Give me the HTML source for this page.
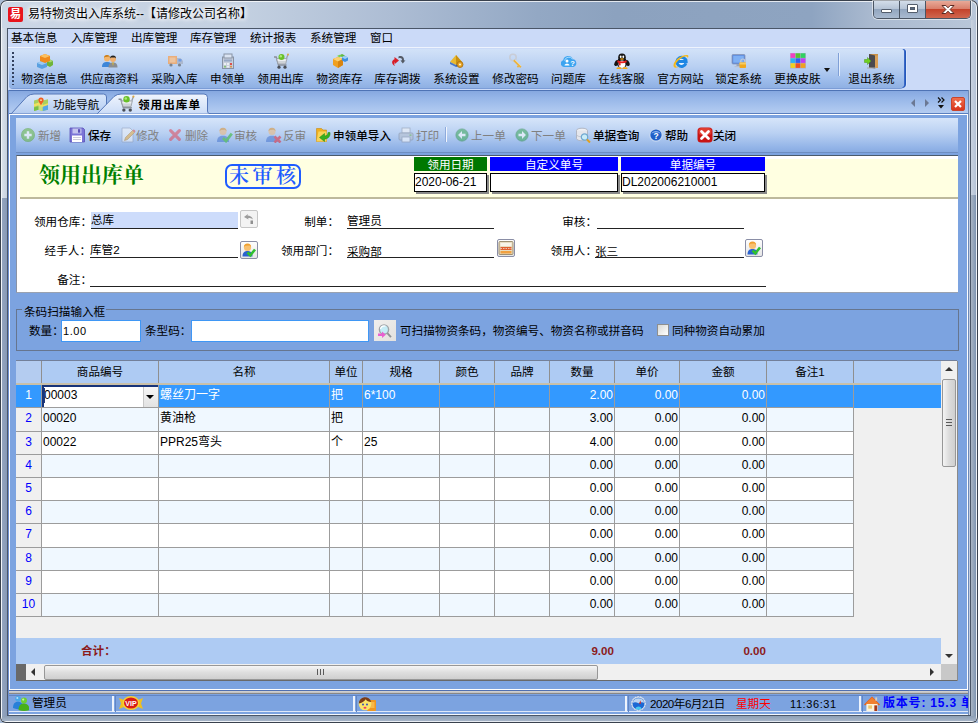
<!DOCTYPE html>
<html><head><meta charset="utf-8">
<style>
*{box-sizing:border-box;margin:0;padding:0}
html,body{width:978px;height:723px;overflow:hidden}
body{position:relative;font-family:"Liberation Sans","Noto Sans CJK SC",sans-serif;font-size:11.6px;color:#000;background:#a9bcd6}
div,span,svg,b,i{position:absolute;white-space:nowrap;font-style:normal}
.t{line-height:14px;height:14px}
.c{text-align:center}
.r{text-align:right}
#frame{left:0;top:0;width:978px;height:723px;border-radius:7px 7px 6px 6px;background:linear-gradient(90deg,#ccd7e6 0,#c3d0e1 25%,#adbdd4 40%,#93a8c4 55%,#8ca2bf 63%,#8ea4c1 83%,#a9b9cf 89%,#b9c7d9 100%);box-shadow:inset 0 0 0 1px #39414d, inset 0 0 0 2px rgba(255,255,255,.75)}
#client{left:8px;top:29px;width:962px;height:686px;background:#7ca3e0;box-shadow:0 0 0 1px #4a5668}
#title{left:28px;top:7px;font-size:12px;line-height:15px;color:#000;text-shadow:0 0 6px #fff,0 0 6px #fff,0 0 4px #fff}
#appicon{left:8px;top:7px;width:15px;height:15px;background:#e8141c;border-radius:2px;color:#fff;font-size:11px;line-height:14px;text-align:center;font-weight:bold}
#capbtn{left:873px;top:1px;width:98px;height:18px;border:1px solid #4b5563;border-top:none;border-radius:0 0 5px 5px;overflow:hidden;box-shadow:0 0 0 1px rgba(255,255,255,.55)}
#capbtn .b{top:0;height:17px;background:linear-gradient(#d3dde9 0,#b6c4d6 45%,#93a6bf 50%,#a9bad0 100%)}
#capbtn .x{background:linear-gradient(#e8a998 0,#d9806c 45%,#c4432b 50%,#d0674f 100%)}
#menubar{left:8px;top:29px;width:962px;height:19px;background:#cbdaf8;border-bottom:1px solid #eef3fd}
#menubar span{top:1px;line-height:15px}
#tbrow{left:8px;top:48px;width:962px;height:42px;background:#cbdaf8}
#tb{left:9px;top:49px;width:895px;height:39px;border-radius:0 3px 4px 4px;background:linear-gradient(#d2e2f8 0,#b9d0f2 45%,#9dbceb 80%,#8fb0e3 100%);box-shadow:1px 0 0 #3a68c6,2px 0 0 #2458bc,3px 0 0 #dbe6fa,0 1px 0 #7b9cd6}
.tbi{top:48px;height:40px}
.tbi .l{left:0;right:0;top:24px;text-align:center;line-height:14px}
.tbi svg{left:50%;margin-left:-8px;top:5px;width:16px;height:16px}
#tabs{left:9px;top:90px;width:959px;height:24px;background:linear-gradient(#86a8e0 0,#95b5e8 30%,#b4ccf1 100%);border-top:1px solid #4e73b5;border-bottom:1px solid #5a7fbf}
#page{left:9px;top:114px;width:959px;height:576px;border:1px solid #fff;background:#7ca3e0}
#itb{left:16px;top:118px;width:942px;height:35px;background:linear-gradient(#d6e5fa 0,#b9d0f2 45%,#94b5e8 85%,#88abe2 100%);border-bottom:1px solid #6d8dc2}
#itb .l{top:11px;line-height:14px;font-weight:500}
#itb .d{color:#808080;font-weight:400}
#itb svg{top:9px;width:16px;height:16px}
#form{left:16px;top:155px;width:942px;height:138px;background:#fff;border-top:1px solid #4a5a6c;border-left:1px solid #8a93a5;border-bottom:1px solid #9aa2b0}
#hdr{left:20px;top:159px;width:938px;height:40px;background:#ffffe1;border-bottom:2px solid #bdb99c}
#ftitle{left:39px;top:161px;font-family:"Liberation Serif","Noto Serif CJK SC",serif;font-weight:bold;font-size:21px;line-height:28px;color:#008000}
#stamp{left:225px;top:164px;width:76px;height:25px;border:2px solid #1f5cff;border-radius:7px;color:#1f5cff;font-family:"Liberation Serif","Noto Serif CJK SC",serif;font-size:20px;font-weight:600;line-height:20px;text-align:left;letter-spacing:3.5px;padding-left:2px}
.hl{top:157px;height:14px;color:#fff;text-align:center;line-height:16px;font-size:11.6px;overflow:hidden}
.hi{top:173px;height:19px;background:#fff;border:1px solid #000;box-shadow:2px 2px 0 #8a8a8a;line-height:16px;padding-left:0;font-size:12px}
.fl{line-height:14px}
.ul{height:1px;background:#222}
.sb{width:18px;height:18px;border:1px solid #8a8ea6;border-radius:2px;background:linear-gradient(#fdfdfd,#e6e6e6)}
#gb{left:16px;top:309px;width:943px;height:42px;border:1px solid #66758f}
.inp{background:#fff;border:1px solid #3f97f5;height:22px}
#grid{left:16px;top:360px;width:941px;height:321px;background:#f0f0f0;border-top:1px solid #73809a}
.gh{top:361px;height:22px;background:#aecbf3;line-height:22px;text-align:center;border-right:1px solid #8f8f8f}
.cell{border-right:1px solid #9c9c9c;border-bottom:1px solid #9c9c9c;line-height:21px;font-size:12px}
.num{text-align:right}
#status{left:9px;top:690px;width:959px;height:25px;background:linear-gradient(#4f6fb0 0,#4f6fb0 1px,#d4d4d4 1px,#bdbdbd 3px,#878787 3px,#878787 4px,#7ca3e0 4px,#7ca3e0 5px,#6285c4 5px,#6285c4 6px,#7ca3e0 6px,#7ca3e0 21px,#dfe8f8 21px,#dfe8f8 22px,#7ca3e0 22px,#7ca3e0 24px,#f4f7fc 24px)}
</style></head><body>
<div id="frame"></div>
<div id="appicon">易</div>
<div id="title">易特物资出入库系统--【请修改公司名称】</div>
<div id="capbtn">
  <div class="b" style="left:0;width:25px"></div>
  <div class="b" style="left:26px;width:25px"></div>
  <div class="b x" style="left:52px;width:45px"></div>
  <div style="left:25px;top:0;width:1px;height:17px;background:#4b5563"></div>
  <div style="left:51px;top:0;width:1px;height:17px;background:#4b5563"></div>
  <div style="left:7px;top:8px;width:11px;height:4px;background:#fff;border:1px solid #535d6c;border-radius:1px"></div>
  <div style="left:33px;top:3px;width:11px;height:9px;border:1px solid #535d6c;background:#fff;border-radius:1px"></div>
  <div style="left:36px;top:6px;width:5px;height:3px;border:1px solid #535d6c;background:#5a6980"></div>
  <svg style="left:66px;top:3px" width="16" height="11" viewBox="0 0 16 11"><path d="M2 1.500h3.800l2.200 2.300 2.200-2.300h3.800l-3.900 4 3.900 4h-3.800L8 7.200 5.800 9.500h-3.800l3.900-4z" fill="#fff" stroke="#5a2a22" stroke-width="1"/></svg>
</div>
<div id="client"></div>
<div style="left:2px;top:28px;width:5px;height:170px;background:linear-gradient(90deg,#d9e0ea,#c6d0de)"></div>
<div style="left:2px;top:198px;width:5px;height:519px;background:linear-gradient(90deg,#94a5bf,#8799b5)"></div>
<div style="left:971px;top:20px;width:5px;height:175px;background:linear-gradient(90deg,#c9d3e0,#b5c3d6)"></div>
<div style="left:971px;top:195px;width:5px;height:522px;background:linear-gradient(90deg,#a9b5c4,#8096b2)"></div>
<div style="left:2px;top:716px;width:974px;height:5px;background:linear-gradient(#8d9fb6,#a7b5c8)"></div>
<div style="left:968px;top:90px;width:1px;height:625px;background:#6f8ab8"></div>
<div style="left:969px;top:90px;width:1px;height:625px;background:#c4cfe2"></div>
<div style="left:8px;top:90px;width:1px;height:625px;background:#6f90d0"></div>
<div id="menubar">
<span style="left:3px">基本信息</span>
<span style="left:63px">入库管理</span>
<span style="left:123px">出库管理</span>
<span style="left:182px">库存管理</span>
<span style="left:242px">统计报表</span>
<span style="left:302px">系统管理</span>
<span style="left:362px">窗口</span>
</div>
<div id="tbrow"></div><div id="tb"></div>
<div style="left:12px;top:52px;width:2px;height:33px;background:repeating-linear-gradient(#33415e 0,#33415e 2px,transparent 2px,transparent 4px)"></div>
<div class="tbi" style="left:15px;width:59px"><svg viewBox="0 0 16 16"><path d="M0 10l5-2 5 2v4l-5 2-5-2z" fill="#5aa0e0"/><path d="M0 10l5 2 5-2-5-2z" fill="#9ccaf2"/><path d="M10 8l3-1.500 3 1.500v4l-3 2-3-1.500z" fill="#6fb43a"/><path d="M10 8l3 1.500 3-1.500-3-1.500z" fill="#a7d870"/><path d="M3 3l5-2 5 2v5l-5 2-5-2z" fill="#f08a1c"/><path d="M3 3l5 2 5-2-5-2z" fill="#fbc060"/></svg><span class="l">物资信息</span></div>
<div class="tbi" style="left:74px;width:71px"><svg viewBox="0 0 16 16"><circle cx="5" cy="5.500" r="3" fill="#f3b56b"/><path d="M2 5a3 3 0 0 1 6 0l-1-1.500-4 .5z" fill="#c97a12"/><path d="M0 14c0-4 2-5 5-5s5 1 5 5z" fill="#3d86d8"/><circle cx="11" cy="6" r="3" fill="#f0b070"/><path d="M8 5.500a3 3 0 0 1 6 0l-1-1-4 0z" fill="#222"/><path d="M6.500 14.500c0-4 2-5 4.500-5s4.500 1 4.500 5z" fill="#8a8d92"/><path d="M10.300 9.500h1.400l-.7 4z" fill="#e8c020"/></svg><span class="l">供应商资料</span></div>
<div class="tbi" style="left:145px;width:59px"><svg viewBox="0 0 16 16"><g opacity=".8"><rect x="1" y="3" width="9" height="8" fill="#f2a45e"/><rect x="2.500" y="4.500" width="6" height="5" fill="#f7c08c"/><path d="M10 5h3.500l2.500 3v3h-6z" fill="#a9b3c6"/><rect x="11.500" y="6" width="3" height="2.500" fill="#5f8fe0"/><circle cx="4" cy="12" r="1.600" fill="#6b7078"/><circle cx="12.500" cy="12" r="1.600" fill="#6b7078"/></g></svg><span class="l">采购入库</span></div>
<div class="tbi" style="left:204px;width:47px"><svg viewBox="0 0 16 16"><g opacity=".85"><rect x="2.500" y="4" width="11" height="11.500" fill="#c9ced8" stroke="#7f8898"/><rect x="4" y="1" width="8" height="4" fill="#dfe6f2" stroke="#7f8898"/><rect x="4" y="6.500" width="8" height="2" fill="#8fa0bd"/><rect x="4" y="10" width="2" height="2" fill="#f4f4f4"/><rect x="7" y="10" width="2" height="2" fill="#f4f4f4"/><rect x="10" y="10" width="2" height="2" fill="#e03a30"/><rect x="4" y="12.800" width="2" height="1.700" fill="#7cbf60"/><rect x="7" y="12.800" width="2" height="1.700" fill="#f4f4f4"/><rect x="10" y="12.800" width="2" height="1.700" fill="#e08a30"/></g></svg><span class="l">申领单</span></div>
<div class="tbi" style="left:251px;width:59px"><svg viewBox="0 0 16 16"><path d="M1 4h2.200l2.300 8h8" fill="none" stroke="#8a8f98" stroke-width="1.400"/><path d="M13.500 5.500l1.500-4" fill="none" stroke="#9a9fa8" stroke-width="1.300"/><path d="M3.500 5.500h10.500l-1.300 5.500h-7.500z" fill="#cfd3d8" stroke="#9aa0a8" stroke-width=".8"/><path d="M4.500 6.300h8.500l-.4 1.700h-7.600z" fill="#eceef0"/><circle cx="8.500" cy="4" r="3" fill="#68c028"/><circle cx="7.800" cy="3.200" r="1.200" fill="#b0e878"/><circle cx="6" cy="14.200" r="1.600" fill="#4a4e56"/><circle cx="12" cy="14.200" r="1.600" fill="#4a4e56"/><circle cx="15" cy="1.500" r="1" fill="#e0a840"/></svg><span class="l">领用出库</span></div>
<div class="tbi" style="left:310px;width:59px"><svg viewBox="0 0 16 16"><path d="M1 6l5-2 5 2v6l-5 3-5-3z" fill="#f0a020"/><path d="M1 6l5 2.500 5-2.500-5-2z" fill="#fbd070"/><path d="M6 8.500v6.500l5-3v-6z" fill="#d88410"/><path d="M7 2.500l3-1.500 3 1.500-3 1.500z" fill="#60b840"/><path d="M10 4.500l3-1.500 3 1.500v3l-3 1.500-3-1.500z" fill="#3f8fe0"/><path d="M10 4.500l3 1.500 3-1.500-3-1.500z" fill="#9cd0f8"/><path d="M5 3l2.500-1.200 2.500 1.200-2.500 1.200z" fill="#7cd050"/></svg><span class="l">物资库存</span></div>
<div class="tbi" style="left:368px;width:59px"><svg viewBox="0 0 16 16"><path d="M8.500 3.500c3-1.500 6 .5 5.500 4l1.500-.3-2.700 3.300-2.300-3 1.500-.2c.2-1.800-1.500-2.800-3.500-1.800z" fill="#555b66"/><path d="M8 6.500l-4.500-3.500v2.200c-3 .8-3.500 5 .5 6.800 -1.500-2 -1-3.800 -.5-4v2.200z" fill="#d81e28" transform="translate(1,1)"/></svg><span class="l">库存调拨</span></div>
<div class="tbi" style="left:427px;width:59px"><svg viewBox="0 0 16 16"><path d="M1 9l6-7 6 7-6 3z" fill="#e8b830"/><path d="M7 2l6 7-6 3z" fill="#c89010"/><path d="M1 9l6 3v2l-6-3z" fill="#4a78c8"/><path d="M7 12l6-3v2l-6 3z" fill="#3560b0"/><circle cx="11" cy="11.500" r="3" fill="#e8a020" stroke="#a06a10" stroke-width=".8"/><circle cx="11" cy="11.500" r="1.100" fill="#fff3c0"/></svg><span class="l">系统设置</span></div>
<div class="tbi" style="left:486px;width:59px"><svg viewBox="0 0 16 16"><g opacity=".9"><circle cx="5" cy="4.500" r="3.200" fill="none" stroke="#c9ccd4" stroke-width="1.600"/><path d="M6.500 6.500l7 7-1.200 1.500-1.300-1.300-1 1-1.200-1.200 1-1-4.600-4.600z" fill="#f0b030"/><path d="M7 7l6 6" stroke="#fbe090" stroke-width=".8"/></g></svg><span class="l">修改密码</span></div>
<div class="tbi" style="left:545px;width:47px"><svg viewBox="0 0 16 16"><path d="M3 14a3.500 3.500 0 0 1-.8-6.800 5 5 0 0 1 9.600-1 4 4 0 0 1 .7 7.800z" fill="#3da4f0"/><path d="M3.500 7.500a4.500 4.500 0 0 1 8-1.500" fill="none" stroke="#a8dcff" stroke-width="1"/><circle cx="6" cy="8" r="1.500" fill="#fff"/><path d="M3.500 12.500c0-2.500 5-2.500 5 0z" fill="#fff"/><text x="9.300" y="12.500" font-family="Liberation Sans,sans-serif" font-weight="bold" font-size="7.500" fill="#fff">?</text></svg><span class="l">问题库</span></div>
<div class="tbi" style="left:592px;width:59px"><svg viewBox="0 0 16 16"><ellipse cx="2.600" cy="10" rx="2" ry="3.200" fill="#151515" transform="rotate(25 2.600 10)"/><ellipse cx="13.400" cy="10" rx="2" ry="3.200" fill="#151515" transform="rotate(-25 13.400 10)"/><ellipse cx="8" cy="9.800" rx="5.200" ry="5.400" fill="#151515"/><ellipse cx="8" cy="4.500" rx="3.800" ry="3.900" fill="#151515"/><ellipse cx="8" cy="11.200" rx="3.400" ry="3.700" fill="#fff"/><path d="M3.600 7.300c2.500 1.500 6.300 1.500 8.800 0l.4 1.900c-2.700 1.500-6.900 1.500-9.600 0z" fill="#e82020"/><path d="M4.800 8.800l.2 3.800 1.700-.3-.3-3.200z" fill="#e82020"/><ellipse cx="6.700" cy="3.800" rx=".9" ry="1.200" fill="#fff"/><ellipse cx="9.300" cy="3.800" rx=".9" ry="1.200" fill="#fff"/><ellipse cx="8" cy="6" rx="2" ry=".8" fill="#f8a810"/><ellipse cx="5" cy="15.200" rx="2.600" ry="1" fill="#f8a810"/><ellipse cx="11" cy="15.200" rx="2.600" ry="1" fill="#f8a810"/></svg><span class="l">在线客服</span></div>
<div class="tbi" style="left:651px;width:59px"><svg viewBox="0 0 16 16"><circle cx="8.500" cy="8.700" r="4.600" fill="#e4f2ff"/><path d="M12.900 10.200a4.600 4.600 0 1 1 .2-1.700h-8.600" fill="none" stroke="#1c86e4" stroke-width="3"/><path d="M.8 13.800c-2-4.200 6-11.800 13-11.800 2.200 0 1.800 2 .8 3.600 .4-2-1-2.400-2.600-2.100-5 1-10.700 7.200-9.200 9.700 .8 1.200 3 .3 4.200-.5-2.600 2.200-5.200 2.500-6.200 1.100z" fill="#f4b818"/></svg><span class="l">官方网站</span></div>
<div class="tbi" style="left:709px;width:59px"><svg viewBox="0 0 16 16"><rect x="1" y="1.500" width="13" height="9.500" rx="1" fill="#5a86d8" stroke="#8a98b8" stroke-width=".8"/><rect x="2.200" y="2.700" width="10.600" height="7" fill="#7fb0f4"/><rect x="5.500" y="11" width="4" height="2" fill="#9aa4b8"/><rect x="3.500" y="13" width="8" height="1.200" fill="#b8c0d0"/><path d="M9.800 9.500v-1.500a2 2 0 0 1 4 0v1.500" fill="none" stroke="#c8ccd4" stroke-width="1.200"/><rect x="8.500" y="9.500" width="6.500" height="5.500" rx=".8" fill="#f0a820"/><rect x="8.500" y="9.500" width="6.500" height="2" fill="#f8cc60"/></svg><span class="l">锁定系统</span></div>
<div class="tbi" style="left:768px;width:59px"><svg viewBox="0 0 16 16"><rect x="0" y="0" width="16" height="15.500" fill="#8a7a90" opacity=".35"/><rect x="0.5" y="0.3" width="4.700" height="4.600" fill="#f040c0"/><rect x="5.6" y="0.3" width="4.700" height="4.600" fill="#58c030"/><rect x="10.7" y="0.3" width="4.700" height="4.600" fill="#30d060"/><rect x="0.5" y="5.3" width="4.700" height="4.600" fill="#30b0f0"/><rect x="5.6" y="5.3" width="4.700" height="4.600" fill="#3060f0"/><rect x="10.7" y="5.3" width="4.700" height="4.600" fill="#c040f0"/><rect x="0.5" y="10.3" width="4.700" height="4.600" fill="#f0d020"/><rect x="5.6" y="10.3" width="4.700" height="4.600" fill="#f05020"/><rect x="10.7" y="10.3" width="4.700" height="4.600" fill="#f0a020"/></svg><span class="l">更换皮肤</span></div>
<div class="tbi" style="left:842px;width:59px"><svg viewBox="0 0 16 16"><path d="M5 1h9v14h-9z" fill="#c89048"/><path d="M5 1l6 1.500v13l-6-1z" fill="#4a4a50"/><path d="M11 2.500h3v12.500h-3z" fill="#d8a058"/><path d="M3 14.500h9v1h-9z" fill="#a8a8a8"/><path d="M0.500 6.500h3v-2l3.500 3.500-3.500 3.500v-2h-3z" fill="#70d020" stroke="#4a9a10" stroke-width=".5"/></svg><span class="l">退出系统</span></div>
<div style="left:824px;top:68px;border:3px solid transparent;border-top:4px solid #111;border-bottom:none;width:0;height:0"></div>
<div style="left:838px;top:53px;width:1px;height:23px;background:#7f9fd6"></div><div style="left:839px;top:53px;width:1px;height:23px;background:#e4eefc"></div>
<div id="tabs"></div>
<svg style="left:9px;top:90px" width="420" height="25" viewBox="0 0 420 25">
<defs><linearGradient id="tg1" x1="0" y1="0" x2="0" y2="1"><stop offset="0" stop-color="#d8e6fb"/><stop offset="1" stop-color="#b4ccf1"/></linearGradient>
<linearGradient id="tg2" x1="0" y1="0" x2="0" y2="1"><stop offset="0" stop-color="#f0f5fd"/><stop offset="1" stop-color="#cbdcf7"/></linearGradient></defs>
<path d="M2 24 L18 6.500 Q21 4 25 4 L94.500 4 Q97.500 4 97.500 7 L97.500 24 Z" fill="url(#tg1)" stroke="#5577b8" stroke-width="1"/>
<path d="M88 24 L105 6.500 Q108 4 112 4 L195 4 Q198.500 4 198.500 7.500 L198.500 21 Q198.500 24 201.500 24 Z" fill="url(#tg2)" stroke="#5577b8" stroke-width="1"/>
<path d="M88.500 24.500 L200 24.500" stroke="#cbdcf7" stroke-width="1.500"/>
</svg>
<svg style="left:34px;top:97px" width="14" height="14" viewBox="0 0 16 16"><path d="M0 4l5-1.500 5 1.500 6-1.500v12l-6 1.500-5-1.500-5 1.500z" fill="#a8d060"/><path d="M5 2.500l5 1.500v12l-5-1.500z" fill="#c8e080"/><path d="M0 8l5-1.500 5 2.500 6-2v3l-6 2-5-2.500-5 1.500z" fill="#f0e060"/><path d="M10 11l6-2v5.500l-6 1.500z" fill="#58a8e8"/><path d="M0 12l5-1.500v4l-5 1.500z" fill="#78c048"/><path d="M8 9.500c-1.500-2.500-3-4-3-5.800a3 3 0 0 1 6 0c0 1.800-1.500 3.300-3 5.800z" fill="#f06020"/><circle cx="8" cy="3.600" r="1.100" fill="#fbd0a0"/></svg>
<span class="t" style="left:53px;top:98px">功能导航</span>
<svg style="left:117px;top:95px" width="18" height="17" viewBox="0 0 16 16"><path d="M1 4h2.200l2.300 8h8" fill="none" stroke="#8a8f98" stroke-width="1.400"/><path d="M13.500 5.500l1.500-4" fill="none" stroke="#9a9fa8" stroke-width="1.300"/><path d="M3.500 5.500h10.500l-1.300 5.500h-7.500z" fill="#cfd3d8" stroke="#9aa0a8" stroke-width=".8"/><path d="M4.500 6.300h8.500l-.4 1.700h-7.600z" fill="#eceef0"/><circle cx="8.500" cy="4" r="3" fill="#68c028"/><circle cx="7.800" cy="3.200" r="1.200" fill="#b0e878"/><circle cx="6" cy="14.200" r="1.600" fill="#4a4e56"/><circle cx="12" cy="14.200" r="1.600" fill="#4a4e56"/><circle cx="15" cy="1.500" r="1" fill="#e0a840"/></svg>
<span class="t" style="left:138px;top:98px;font-weight:bold;letter-spacing:1px">领用出库单</span>
<div style="left:911px;top:99px;width:0;height:0;border:4px solid transparent;border-right:4px solid #6b7894;border-left:none"></div>
<div style="left:925px;top:99px;width:0;height:0;border:4px solid transparent;border-left:4px solid #6b7894;border-right:none"></div>
<svg style="left:936px;top:96px" width="10" height="14" viewBox="0 0 10 14"><path d="M2 1.500l2.500 2.500-2.500 2.500M5.500 1.500l2.500 2.500-2.500 2.500" fill="none" stroke="#111" stroke-width="1.200"/><path d="M2 9h6l-3 3.500z" fill="#111"/></svg>
<div style="left:951px;top:97px;width:14px;height:14px;border-radius:2px;background:linear-gradient(#f0704e,#d8341c);border:1px solid #c8442c"></div>
<svg style="left:951px;top:97px" width="14" height="14" viewBox="0 0 14 14"><path d="M4 4l6 6M10 4l-6 6" stroke="#fff" stroke-width="2.200" stroke-linecap="butt"/></svg>
<div id="page"></div>
<div id="itb">
<svg style="left:5px;top:9.5px;width:14px;height:14px" viewBox="0 0 16 16" opacity=".55"><circle cx="8" cy="8" r="7.500" fill="#68b840"/><circle cx="8" cy="8" r="7.500" fill="none" stroke="#4c9c28" stroke-width=".8"/><path d="M8 3.800v8.400M3.800 8h8.400" stroke="#fff" stroke-width="2.800"/></svg><span class="l d" style="left:22px">新增</span>
<svg style="left:53px;top:9px;width:16px;height:16px" viewBox="0 0 16 16"><path d="M1 1h13l1.500 1.500v12.500h-14.500z" fill="#7b74d6" stroke="#5a50b8" stroke-width=".8"/><rect x="3.500" y="1.500" width="9" height="5" fill="#c4c4ee"/><rect x="9" y="2.200" width="2.200" height="3.500" fill="#5a50b8"/><rect x="3" y="8.500" width="10" height="6.500" fill="#fff"/><path d="M4 10.500h8M4 12.500h8" stroke="#c0c0d0" stroke-width=".8"/></svg><span class="l" style="left:72px">保存</span>
<svg style="left:104px;top:9px;width:16px;height:16px" viewBox="0 0 16 16" opacity=".55"><path d="M2 1h8l3 3v11h-11z" fill="#f4f6fa" stroke="#8a98b0" stroke-width=".8"/><path d="M12.500 3.500l2 2-7 7-3 1 1-3z" fill="#f0b040" stroke="#b07820" stroke-width=".6"/><path d="M12.500 3.500l2 2 .8-.8c.5-.5-1.500-2.500-2-2z" fill="#e85050"/></svg><span class="l d" style="left:120px">修改</span>
<svg style="left:152px;top:9.5px;width:14px;height:14px" viewBox="0 0 16 16" opacity=".55"><path d="M3 3l10 10M13 3l-10 10" stroke="#e04858" stroke-width="3.600" stroke-linecap="round"/></svg><span class="l d" style="left:169px">删除</span>
<svg style="left:201px;top:9px;width:16px;height:16px" viewBox="0 0 16 16" opacity=".55"><circle cx="6" cy="4.500" r="3.500" fill="#f0b878"/><path d="M2.500 4.300a3.500 3.500 0 0 1 7 0l-1.600-1.600-3.800 .2z" fill="#d89030"/><path d="M0 15c0-5 2.800-6.300 6-6.300s6 1.300 6 6.300z" fill="#4a78d0"/><path d="M6 11l3 3 5.800-7.300" fill="none" stroke="#30b828" stroke-width="2.800"/></svg><span class="l d" style="left:218px">审核</span>
<svg style="left:250px;top:9px;width:16px;height:16px" viewBox="0 0 16 16" opacity=".55"><circle cx="6" cy="4.500" r="3.500" fill="#f0b878"/><path d="M2.500 4.300a3.500 3.500 0 0 1 7 0l-1.600-1.600-3.800 .2z" fill="#d89030"/><path d="M0 15c0-5 2.800-6.300 6-6.300s6 1.300 6 6.300z" fill="#4a78d0"/><path d="M8.500 9.500l6 6M14.500 9.500l-6 6" stroke="#e02838" stroke-width="2.600"/></svg><span class="l d" style="left:267px">反审</span>
<svg style="left:299px;top:9px;width:16px;height:16px" viewBox="0 0 16 16"><path d="M1.500 1.500h5l1.500 1.500h3.500v11.500h-10z" fill="#f0b020" stroke="#c88a10" stroke-width=".6"/><path d="M3.500 4.500h8v10h-10z" fill="#f8d458"/><path d="M15 5.500c.5 4-2 6.500-5.500 6.500v2.500l-5-4 5-4v2.500c2 0 3.500-1 3.500-3.500z" fill="#38b020" stroke="#208810" stroke-width=".5"/></svg><span class="l" style="left:317px">申领单导入</span>
<svg style="left:382px;top:9px;width:16px;height:16px" viewBox="0 0 16 16" opacity=".55"><rect x="4" y="1" width="8" height="5" fill="#f8f8f8" stroke="#8890a0" stroke-width=".8"/><rect x="1" y="6" width="14" height="7" rx="1" fill="#b8c0cc" stroke="#7a8290" stroke-width=".8"/><rect x="4" y="10" width="8" height="5" fill="#fff" stroke="#8890a0" stroke-width=".8"/><rect x="11.500" y="7.500" width="2" height="1.200" fill="#50b030"/></svg><span class="l d" style="left:400px">打印</span>
<svg style="left:439px;top:9.5px;width:14px;height:14px" viewBox="0 0 16 16" opacity=".55"><circle cx="8" cy="8" r="7" fill="#3ca858"/><circle cx="8" cy="8" r="7" fill="none" stroke="#2a8440" stroke-width=".8"/><path d="M12 6.500h-4v-3l-4.500 4.500 4.500 4.500v-3h4z" fill="#fff"/></svg><span class="l d" style="left:455px">上一单</span>
<svg style="left:499px;top:9.5px;width:14px;height:14px" viewBox="0 0 16 16" opacity=".55"><circle cx="8" cy="8" r="7" fill="#3ca858"/><circle cx="8" cy="8" r="7" fill="none" stroke="#2a8440" stroke-width=".8"/><path d="M4 6.500h4v-3l4.500 4.500-4.500 4.500v-3h-4z" fill="#fff"/></svg><span class="l d" style="left:515px">下一单</span>
<svg style="left:559px;top:9px;width:16px;height:16px" viewBox="0 0 16 16"><ellipse cx="7" cy="3.500" rx="5.500" ry="2.300" fill="#eef0f4" stroke="#a8acb8" stroke-width=".8"/><path d="M1.500 3.500v8c0 1.300 2.500 2.300 5.500 2.300s5.500-1 5.500-2.300v-8" fill="#e4e6ec" stroke="#a8acb8" stroke-width=".8"/><path d="M1.500 7.500c0 1.300 2.500 2.300 5.500 2.300s5.500-1 5.500-2.300" fill="none" stroke="#b8bcc8" stroke-width=".8"/><circle cx="9.500" cy="10" r="3.200" fill="#c8ecf8" stroke="#70a8d0" stroke-width="1.200"/><path d="M12 12.500l3 3" stroke="#e0a020" stroke-width="2"/></svg><span class="l" style="left:577px">单据查询</span>
<svg style="left:632px;top:9px;width:16px;height:16px" viewBox="0 0 16 16"><circle cx="8" cy="8" r="6.800" fill="#c8d8f0"/><circle cx="8" cy="8" r="5.600" fill="#2060c8"/><path d="M3.500 6.500c1-3.500 8-3.500 9 0-2-1.500-7-1.500-9 0z" fill="#8cb4f0"/><text x="5.600" y="11.600" font-family="Liberation Sans,sans-serif" font-weight="bold" font-size="8.500" fill="#fff">?</text></svg><span class="l" style="left:649px">帮助</span>
<svg style="left:681px;top:9px;width:16px;height:16px" viewBox="0 0 16 16"><rect x=".5" y=".5" width="15" height="15" rx="3.500" fill="#c81414"/><rect x="1.500" y="1" width="13" height="7" rx="3" fill="#e03c30"/><path d="M4.500 4.500l7 7M11.500 4.500l-7 7" stroke="#fff" stroke-width="2.800" stroke-linecap="round"/></svg><span class="l" style="left:697px">关闭</span>
<div style="left:429px;top:9px;width:1px;height:15px;background:#8eabdc"></div><div style="left:430px;top:9px;width:1px;height:15px;background:#f2f6fd"></div>
</div>
<div id="form"></div><div id="hdr"></div>
<div id="ftitle">领用出库单</div>
<div id="stamp">未审核</div>
<div class="hl" style="left:414px;width:73px;background:#007800">领用日期</div>
<div class="hl" style="left:490px;width:128px;background:#0000ff">自定义单号</div>
<div class="hl" style="left:621px;width:144px;background:#0000ff">单据编号</div>
<div class="hi" style="left:414px;width:73px">2020-06-21</div>
<div class="hi" style="left:490px;width:128px"></div>
<div class="hi" style="left:621px;width:144px">DL202006210001</div>
<div style="left:91px;top:212px;width:147px;height:16px;background:#cddcfb"></div>
<span class="fl" style="right:886px;top:215px">领用仓库：</span>
<span class="fl" style="left:91px;top:213px">总库</span>
<div class="ul" style="left:91px;top:228px;width:147px"></div>
<div class="sb" style="left:240px;top:210px;border-color:#c6c6c6;background:#f3f3f3"></div><svg style="left:241px;top:211px" width="16" height="16" viewBox="0 0 16 16"><path d="M12 8.500c-1-3-3-4-5.500-4l.5-1.500-4 3 4.500 2.500-.3-1.600c1.800 0 3.600.3 4.800 1.600z" fill="#9c9c9c"/><rect x="9.500" y="9.500" width="2.500" height="3.500" fill="#909090"/></svg>
<span class="fl" style="right:887px;top:244px">经手人：</span>
<span class="fl" style="left:90px;top:243px">库管2</span>
<div class="ul" style="left:90px;top:257px;width:148px"></div>
<div class="sb" style="left:240px;top:241px"></div><svg style="left:241px;top:242px" width="16" height="16" viewBox="0 0 16 16"><circle cx="6.500" cy="5.500" r="3.600" fill="#f8c070"/><path d="M2.900 5a3.600 3.600 0 0 1 7.200 0l-1.600-1.600-4 .3z" fill="#f0a030"/><path d="M1.500 14.500c0-4.500 2.500-5.500 5-5.500s5 1 5 5.500z" fill="#2a62d0"/><path d="M6.500 10.500l2.800 2.800 4.700-5.800" fill="none" stroke="#30c030" stroke-width="2.600"/></svg>
<span class="fl" style="right:886px;top:273px">备注：</span>
<div class="ul" style="left:90px;top:286px;width:676px"></div>
<span class="fl" style="right:639px;top:215px">制单：</span>
<span class="fl" style="left:347px;top:214px">管理员</span>
<div class="ul" style="left:347px;top:228px;width:147px"></div>
<span class="fl" style="right:639px;top:244px">领用部门：</span>
<span class="fl" style="left:347px;top:245px">采购部</span>
<div class="ul" style="left:347px;top:257px;width:147px"></div>
<div class="sb" style="left:497px;top:239px"></div><svg style="left:498px;top:240px" width="16" height="16" viewBox="0 0 16 16"><rect x="1" y="1.500" width="14" height="13" rx="1" fill="#e8dcc0" stroke="#8a7a58" stroke-width=".8"/><rect x="2.500" y="3" width="11" height="3" fill="#f8f4e8"/><rect x="2.500" y="7" width="11" height="3" fill="#e06030"/><rect x="2.500" y="11" width="11" height="2.500" fill="#f0a040"/><path d="M2.500 8.500h11" stroke="#fff" stroke-width=".6" stroke-dasharray="1.500 1"/></svg>
<span class="fl" style="right:381px;top:215px">审核：</span>
<div class="ul" style="left:597px;top:228px;width:147px"></div>
<span class="fl" style="right:381px;top:244px">领用人：</span>
<span class="fl" style="left:595px;top:245px">张三</span>
<div class="ul" style="left:595px;top:257px;width:149px"></div>
<div class="sb" style="left:745px;top:239px"></div><svg style="left:746px;top:240px" width="16" height="16" viewBox="0 0 16 16"><circle cx="6.500" cy="5.500" r="3.600" fill="#f8c070"/><path d="M2.900 5a3.600 3.600 0 0 1 7.200 0l-1.600-1.600-4 .3z" fill="#f0a030"/><path d="M1.500 14.500c0-4.500 2.500-5.500 5-5.500s5 1 5 5.500z" fill="#2a62d0"/><path d="M6.500 10.500l2.800 2.800 4.700-5.800" fill="none" stroke="#30c030" stroke-width="2.600"/></svg>
<div id="gb"></div>
<span class="fl" style="left:22px;top:305px;background:#7ca3e0;padding:0 1px 0 2px">条码扫描输入框</span>
<span class="fl" style="left:29px;top:324px">数量：</span>
<div class="inp" style="left:61px;top:320px;width:80px"></div>
<span class="fl" style="left:63px;top:324px;font-size:11px;letter-spacing:.6px">1.00</span>
<span class="fl" style="left:145px;top:324px">条型码：</span>
<div class="inp" style="left:191px;top:320px;width:178px"></div>
<div style="left:374px;top:320px;width:22px;height:21px;background:linear-gradient(135deg,#f0efed,#e3e1de)"></div><svg style="left:377px;top:323px" width="16" height="16" viewBox="0 0 16 16"><circle cx="7" cy="6.500" r="4.600" fill="#c4ecf6" stroke="#a0a4a8" stroke-width="1.400"/><path d="M3.500 6a3.600 3.600 0 0 1 5-2.800" stroke="#fff" stroke-width="1.200" fill="none"/><path d="M10.300 10.200l3.700 4" stroke="#8e9296" stroke-width="1.800"/><path d="M1 10.500h4v-2l3.800 3.200-3.800 3.200v-2h-4z" fill="#e860d0"/></svg>
<span class="fl" style="left:400px;top:324px">可扫描物资条码，物资编号、物资名称或拼音码</span>
<div style="left:657px;top:324px;width:12px;height:12px;background:linear-gradient(135deg,#d8d8d4,#fff);border:1px solid #8e8f8f"></div>
<span class="fl" style="left:672px;top:324px">同种物资自动累加</span>
<div id="grid"></div>
<div class="gh" style="left:16px;width:925px;border-right:none"></div>
<div class="gh" style="left:16px;width:26px;background:#b4ccf0;"></div>
<div class="gh" style="left:42px;width:117px;">商品编号</div>
<div class="gh" style="left:159px;width:171px;">名称</div>
<div class="gh" style="left:330px;width:33px;">单位</div>
<div class="gh" style="left:363px;width:77px;">规格</div>
<div class="gh" style="left:440px;width:55px;">颜色</div>
<div class="gh" style="left:495px;width:55px;">品牌</div>
<div class="gh" style="left:550px;width:65px;">数量</div>
<div class="gh" style="left:615px;width:65px;">单价</div>
<div class="gh" style="left:680px;width:87px;">金额</div>
<div class="gh" style="left:767px;width:87px;">备注1</div>
<div style="left:16px;top:383px;width:925px;height:2px;background:#c9c0a8"></div>
<div style="left:16px;top:385px;width:925px;height:23px;background:#3399ff"></div>
<div class="cell c" style="left:16px;top:385px;width:26px;height:23px;background:#3399ff;color:#fff">1</div>
<div class="cell" style="left:42px;top:385px;width:117px;height:23px;background:#3399ff;color:#fff;padding-left:1px;"></div>
<div class="cell" style="left:159px;top:385px;width:171px;height:23px;background:#3399ff;color:#fff;padding-left:1px;">螺丝刀一字</div>
<div class="cell" style="left:330px;top:385px;width:33px;height:23px;background:#3399ff;color:#fff;padding-left:1px;">把</div>
<div class="cell" style="left:363px;top:385px;width:77px;height:23px;background:#3399ff;color:#fff;padding-left:1px;">6*100</div>
<div class="cell" style="left:440px;top:385px;width:55px;height:23px;background:#3399ff;color:#fff;padding-left:1px;"></div>
<div class="cell" style="left:495px;top:385px;width:55px;height:23px;background:#3399ff;color:#fff;padding-left:1px;"></div>
<div class="cell num" style="left:550px;top:385px;width:65px;height:23px;background:#3399ff;color:#fff;padding-right:1px;">2.00</div>
<div class="cell num" style="left:615px;top:385px;width:65px;height:23px;background:#3399ff;color:#fff;padding-right:1px;">0.00</div>
<div class="cell num" style="left:680px;top:385px;width:87px;height:23px;background:#3399ff;color:#fff;padding-right:1px;">0.00</div>
<div class="cell" style="left:767px;top:385px;width:87px;height:23px;background:#3399ff;color:#fff;padding-left:1px;"></div>
<div class="cell c" style="left:16px;top:408px;width:26px;height:24px;background:#f0f0f0;color:#0000ff">2</div>
<div class="cell" style="left:42px;top:408px;width:117px;height:24px;background:#f0f8ff;color:#000;padding-left:1px;">00020</div>
<div class="cell" style="left:159px;top:408px;width:171px;height:24px;background:#f0f8ff;color:#000;padding-left:1px;">黄油枪</div>
<div class="cell" style="left:330px;top:408px;width:33px;height:24px;background:#f0f8ff;color:#000;padding-left:1px;">把</div>
<div class="cell" style="left:363px;top:408px;width:77px;height:24px;background:#f0f8ff;color:#000;padding-left:1px;"></div>
<div class="cell" style="left:440px;top:408px;width:55px;height:24px;background:#f0f8ff;color:#000;padding-left:1px;"></div>
<div class="cell" style="left:495px;top:408px;width:55px;height:24px;background:#f0f8ff;color:#000;padding-left:1px;"></div>
<div class="cell num" style="left:550px;top:408px;width:65px;height:24px;background:#f0f8ff;color:#000;padding-right:1px;">3.00</div>
<div class="cell num" style="left:615px;top:408px;width:65px;height:24px;background:#f0f8ff;color:#000;padding-right:1px;">0.00</div>
<div class="cell num" style="left:680px;top:408px;width:87px;height:24px;background:#f0f8ff;color:#000;padding-right:1px;">0.00</div>
<div class="cell" style="left:767px;top:408px;width:87px;height:24px;background:#f0f8ff;color:#000;padding-left:1px;"></div>
<div class="cell c" style="left:16px;top:432px;width:26px;height:23px;background:#f0f0f0;color:#0000ff">3</div>
<div class="cell" style="left:42px;top:432px;width:117px;height:23px;background:#fff;color:#000;padding-left:1px;">00022</div>
<div class="cell" style="left:159px;top:432px;width:171px;height:23px;background:#fff;color:#000;padding-left:1px;">PPR25弯头</div>
<div class="cell" style="left:330px;top:432px;width:33px;height:23px;background:#fff;color:#000;padding-left:1px;">个</div>
<div class="cell" style="left:363px;top:432px;width:77px;height:23px;background:#fff;color:#000;padding-left:1px;">25</div>
<div class="cell" style="left:440px;top:432px;width:55px;height:23px;background:#fff;color:#000;padding-left:1px;"></div>
<div class="cell" style="left:495px;top:432px;width:55px;height:23px;background:#fff;color:#000;padding-left:1px;"></div>
<div class="cell num" style="left:550px;top:432px;width:65px;height:23px;background:#fff;color:#000;padding-right:1px;">4.00</div>
<div class="cell num" style="left:615px;top:432px;width:65px;height:23px;background:#fff;color:#000;padding-right:1px;">0.00</div>
<div class="cell num" style="left:680px;top:432px;width:87px;height:23px;background:#fff;color:#000;padding-right:1px;">0.00</div>
<div class="cell" style="left:767px;top:432px;width:87px;height:23px;background:#fff;color:#000;padding-left:1px;"></div>
<div class="cell c" style="left:16px;top:455px;width:26px;height:23px;background:#f0f0f0;color:#0000ff">4</div>
<div class="cell" style="left:42px;top:455px;width:117px;height:23px;background:#f0f8ff;color:#000;padding-left:1px;"></div>
<div class="cell" style="left:159px;top:455px;width:171px;height:23px;background:#f0f8ff;color:#000;padding-left:1px;"></div>
<div class="cell" style="left:330px;top:455px;width:33px;height:23px;background:#f0f8ff;color:#000;padding-left:1px;"></div>
<div class="cell" style="left:363px;top:455px;width:77px;height:23px;background:#f0f8ff;color:#000;padding-left:1px;"></div>
<div class="cell" style="left:440px;top:455px;width:55px;height:23px;background:#f0f8ff;color:#000;padding-left:1px;"></div>
<div class="cell" style="left:495px;top:455px;width:55px;height:23px;background:#f0f8ff;color:#000;padding-left:1px;"></div>
<div class="cell num" style="left:550px;top:455px;width:65px;height:23px;background:#f0f8ff;color:#000;padding-right:1px;">0.00</div>
<div class="cell num" style="left:615px;top:455px;width:65px;height:23px;background:#f0f8ff;color:#000;padding-right:1px;">0.00</div>
<div class="cell num" style="left:680px;top:455px;width:87px;height:23px;background:#f0f8ff;color:#000;padding-right:1px;">0.00</div>
<div class="cell" style="left:767px;top:455px;width:87px;height:23px;background:#f0f8ff;color:#000;padding-left:1px;"></div>
<div class="cell c" style="left:16px;top:478px;width:26px;height:23px;background:#f0f0f0;color:#0000ff">5</div>
<div class="cell" style="left:42px;top:478px;width:117px;height:23px;background:#fff;color:#000;padding-left:1px;"></div>
<div class="cell" style="left:159px;top:478px;width:171px;height:23px;background:#fff;color:#000;padding-left:1px;"></div>
<div class="cell" style="left:330px;top:478px;width:33px;height:23px;background:#fff;color:#000;padding-left:1px;"></div>
<div class="cell" style="left:363px;top:478px;width:77px;height:23px;background:#fff;color:#000;padding-left:1px;"></div>
<div class="cell" style="left:440px;top:478px;width:55px;height:23px;background:#fff;color:#000;padding-left:1px;"></div>
<div class="cell" style="left:495px;top:478px;width:55px;height:23px;background:#fff;color:#000;padding-left:1px;"></div>
<div class="cell num" style="left:550px;top:478px;width:65px;height:23px;background:#fff;color:#000;padding-right:1px;">0.00</div>
<div class="cell num" style="left:615px;top:478px;width:65px;height:23px;background:#fff;color:#000;padding-right:1px;">0.00</div>
<div class="cell num" style="left:680px;top:478px;width:87px;height:23px;background:#fff;color:#000;padding-right:1px;">0.00</div>
<div class="cell" style="left:767px;top:478px;width:87px;height:23px;background:#fff;color:#000;padding-left:1px;"></div>
<div class="cell c" style="left:16px;top:501px;width:26px;height:23px;background:#f0f0f0;color:#0000ff">6</div>
<div class="cell" style="left:42px;top:501px;width:117px;height:23px;background:#f0f8ff;color:#000;padding-left:1px;"></div>
<div class="cell" style="left:159px;top:501px;width:171px;height:23px;background:#f0f8ff;color:#000;padding-left:1px;"></div>
<div class="cell" style="left:330px;top:501px;width:33px;height:23px;background:#f0f8ff;color:#000;padding-left:1px;"></div>
<div class="cell" style="left:363px;top:501px;width:77px;height:23px;background:#f0f8ff;color:#000;padding-left:1px;"></div>
<div class="cell" style="left:440px;top:501px;width:55px;height:23px;background:#f0f8ff;color:#000;padding-left:1px;"></div>
<div class="cell" style="left:495px;top:501px;width:55px;height:23px;background:#f0f8ff;color:#000;padding-left:1px;"></div>
<div class="cell num" style="left:550px;top:501px;width:65px;height:23px;background:#f0f8ff;color:#000;padding-right:1px;">0.00</div>
<div class="cell num" style="left:615px;top:501px;width:65px;height:23px;background:#f0f8ff;color:#000;padding-right:1px;">0.00</div>
<div class="cell num" style="left:680px;top:501px;width:87px;height:23px;background:#f0f8ff;color:#000;padding-right:1px;">0.00</div>
<div class="cell" style="left:767px;top:501px;width:87px;height:23px;background:#f0f8ff;color:#000;padding-left:1px;"></div>
<div class="cell c" style="left:16px;top:524px;width:26px;height:24px;background:#f0f0f0;color:#0000ff">7</div>
<div class="cell" style="left:42px;top:524px;width:117px;height:24px;background:#fff;color:#000;padding-left:1px;"></div>
<div class="cell" style="left:159px;top:524px;width:171px;height:24px;background:#fff;color:#000;padding-left:1px;"></div>
<div class="cell" style="left:330px;top:524px;width:33px;height:24px;background:#fff;color:#000;padding-left:1px;"></div>
<div class="cell" style="left:363px;top:524px;width:77px;height:24px;background:#fff;color:#000;padding-left:1px;"></div>
<div class="cell" style="left:440px;top:524px;width:55px;height:24px;background:#fff;color:#000;padding-left:1px;"></div>
<div class="cell" style="left:495px;top:524px;width:55px;height:24px;background:#fff;color:#000;padding-left:1px;"></div>
<div class="cell num" style="left:550px;top:524px;width:65px;height:24px;background:#fff;color:#000;padding-right:1px;">0.00</div>
<div class="cell num" style="left:615px;top:524px;width:65px;height:24px;background:#fff;color:#000;padding-right:1px;">0.00</div>
<div class="cell num" style="left:680px;top:524px;width:87px;height:24px;background:#fff;color:#000;padding-right:1px;">0.00</div>
<div class="cell" style="left:767px;top:524px;width:87px;height:24px;background:#fff;color:#000;padding-left:1px;"></div>
<div class="cell c" style="left:16px;top:548px;width:26px;height:23px;background:#f0f0f0;color:#0000ff">8</div>
<div class="cell" style="left:42px;top:548px;width:117px;height:23px;background:#f0f8ff;color:#000;padding-left:1px;"></div>
<div class="cell" style="left:159px;top:548px;width:171px;height:23px;background:#f0f8ff;color:#000;padding-left:1px;"></div>
<div class="cell" style="left:330px;top:548px;width:33px;height:23px;background:#f0f8ff;color:#000;padding-left:1px;"></div>
<div class="cell" style="left:363px;top:548px;width:77px;height:23px;background:#f0f8ff;color:#000;padding-left:1px;"></div>
<div class="cell" style="left:440px;top:548px;width:55px;height:23px;background:#f0f8ff;color:#000;padding-left:1px;"></div>
<div class="cell" style="left:495px;top:548px;width:55px;height:23px;background:#f0f8ff;color:#000;padding-left:1px;"></div>
<div class="cell num" style="left:550px;top:548px;width:65px;height:23px;background:#f0f8ff;color:#000;padding-right:1px;">0.00</div>
<div class="cell num" style="left:615px;top:548px;width:65px;height:23px;background:#f0f8ff;color:#000;padding-right:1px;">0.00</div>
<div class="cell num" style="left:680px;top:548px;width:87px;height:23px;background:#f0f8ff;color:#000;padding-right:1px;">0.00</div>
<div class="cell" style="left:767px;top:548px;width:87px;height:23px;background:#f0f8ff;color:#000;padding-left:1px;"></div>
<div class="cell c" style="left:16px;top:571px;width:26px;height:23px;background:#f0f0f0;color:#0000ff">9</div>
<div class="cell" style="left:42px;top:571px;width:117px;height:23px;background:#fff;color:#000;padding-left:1px;"></div>
<div class="cell" style="left:159px;top:571px;width:171px;height:23px;background:#fff;color:#000;padding-left:1px;"></div>
<div class="cell" style="left:330px;top:571px;width:33px;height:23px;background:#fff;color:#000;padding-left:1px;"></div>
<div class="cell" style="left:363px;top:571px;width:77px;height:23px;background:#fff;color:#000;padding-left:1px;"></div>
<div class="cell" style="left:440px;top:571px;width:55px;height:23px;background:#fff;color:#000;padding-left:1px;"></div>
<div class="cell" style="left:495px;top:571px;width:55px;height:23px;background:#fff;color:#000;padding-left:1px;"></div>
<div class="cell num" style="left:550px;top:571px;width:65px;height:23px;background:#fff;color:#000;padding-right:1px;">0.00</div>
<div class="cell num" style="left:615px;top:571px;width:65px;height:23px;background:#fff;color:#000;padding-right:1px;">0.00</div>
<div class="cell num" style="left:680px;top:571px;width:87px;height:23px;background:#fff;color:#000;padding-right:1px;">0.00</div>
<div class="cell" style="left:767px;top:571px;width:87px;height:23px;background:#fff;color:#000;padding-left:1px;"></div>
<div class="cell c" style="left:16px;top:594px;width:26px;height:23px;background:#f0f0f0;color:#0000ff">10</div>
<div class="cell" style="left:42px;top:594px;width:117px;height:23px;background:#f0f8ff;color:#000;padding-left:1px;"></div>
<div class="cell" style="left:159px;top:594px;width:171px;height:23px;background:#f0f8ff;color:#000;padding-left:1px;"></div>
<div class="cell" style="left:330px;top:594px;width:33px;height:23px;background:#f0f8ff;color:#000;padding-left:1px;"></div>
<div class="cell" style="left:363px;top:594px;width:77px;height:23px;background:#f0f8ff;color:#000;padding-left:1px;"></div>
<div class="cell" style="left:440px;top:594px;width:55px;height:23px;background:#f0f8ff;color:#000;padding-left:1px;"></div>
<div class="cell" style="left:495px;top:594px;width:55px;height:23px;background:#f0f8ff;color:#000;padding-left:1px;"></div>
<div class="cell num" style="left:550px;top:594px;width:65px;height:23px;background:#f0f8ff;color:#000;padding-right:1px;">0.00</div>
<div class="cell num" style="left:615px;top:594px;width:65px;height:23px;background:#f0f8ff;color:#000;padding-right:1px;">0.00</div>
<div class="cell num" style="left:680px;top:594px;width:87px;height:23px;background:#f0f8ff;color:#000;padding-right:1px;">0.00</div>
<div class="cell" style="left:767px;top:594px;width:87px;height:23px;background:#f0f8ff;color:#000;padding-left:1px;"></div>
<div style="left:42px;top:385px;width:116px;height:22px;background:#fff;border-left:2px solid #17347a;border-top:2px solid #17347a"></div>
<span style="left:44px;top:387px;line-height:16px;color:#000;font-size:12px">00003</span>
<div style="left:44px;top:388px;width:1px;height:15px;background:#223a7a"></div>
<div style="left:143px;top:387px;width:15px;height:20px;background:linear-gradient(#f6f6f6,#e2e2e2);border-left:1px solid #c8c8c8"></div>
<div style="left:146px;top:395px;width:0;height:0;border:4px solid transparent;border-top:4px solid #000;border-bottom:none"></div>
<div style="left:16px;top:638px;width:925px;height:26px;background:#aecbf3"></div>
<span style="left:81px;top:644px;line-height:14px;font-weight:bold;color:#8b1a1a">合计：</span>
<span style="right:364px;top:644px;line-height:14px;font-weight:bold;color:#8b1a1a">9.00</span>
<span style="right:212px;top:644px;line-height:14px;font-weight:bold;color:#8b1a1a">0.00</span>
<div style="left:941px;top:361px;width:16px;height:303px;background:#f0f0f0"></div>
<div style="left:942px;top:379px;width:14px;height:88px;border:1px solid #979797;border-radius:2px;background:linear-gradient(90deg,#f4f4f4,#dcdcdc 50%,#cfcfcf)"></div>
<div style="left:946px;top:419px;width:6px;height:7px;background:repeating-linear-gradient(#5a5a5a 0,#5a5a5a 1px,transparent 1px,transparent 3px)"></div>
<div style="left:945px;top:367px;width:0;height:0;border:4px solid transparent;border-bottom:4px solid #333;border-top:none"></div>
<div style="left:945px;top:654px;width:0;height:0;border:4px solid transparent;border-top:4px solid #333;border-bottom:none"></div>
<div style="left:16px;top:664px;width:925px;height:17px;background:#f0f0f0"></div>
<div style="left:16px;top:664px;width:10px;height:17px;background:#696969"></div>
<div style="left:44px;top:665px;width:554px;height:15px;border:1px solid #979797;border-radius:2px;background:linear-gradient(#f5f5f5,#dedede 50%,#cfcfcf)"></div>
<div style="left:317px;top:669px;width:8px;height:6px;background:repeating-linear-gradient(90deg,#5a5a5a 0,#5a5a5a 1px,transparent 1px,transparent 3px)"></div>
<div style="left:31px;top:668px;width:0;height:0;border:4px solid transparent;border-right:4px solid #333;border-left:none"></div>
<div style="left:930px;top:668px;width:0;height:0;border:4px solid transparent;border-left:4px solid #333;border-right:none"></div>
<div style="left:941px;top:664px;width:16px;height:17px;background:#c8c8c8"></div>
<div style="left:16px;top:680px;width:942px;height:1px;background:#6a6a6a"></div>
<div style="left:957px;top:361px;width:1px;height:320px;background:#8a8a8a"></div>
<div id="status"></div>
<svg style="left:13px;top:695px" width="16" height="16" viewBox="0 0 16 16"><circle cx="5" cy="3.800" r="2.800" fill="#4aa8e8"/><path d="M0 13c0-5 2.500-6.300 5-6.300s5 1.300 5 6.300c-3 1.500-7 1.500-10 0z" fill="#2880d8"/><circle cx="4.300" cy="3" r="1" fill="#b8e0fa"/><circle cx="11" cy="5.500" r="3" fill="#6cd030"/><path d="M5.500 15c0-5 2.800-6.500 5.500-6.500s5.500 1.500 5.500 6.500c-3.500 1.300-7.500 1.300-11 0z" fill="#48b018"/><circle cx="10.200" cy="4.600" r="1.100" fill="#c8f0a0"/></svg>
<span class="fl" style="left:32px;top:696px">管理员</span>
<div style="left:112px;top:696px;width:2px;height:16px;background:#eef3fc"></div><div style="left:115px;top:696px;width:1px;height:16px;background:#6285c4"></div>
<div style="left:353px;top:696px;width:2px;height:16px;background:#eef3fc"></div><div style="left:356px;top:696px;width:1px;height:16px;background:#6285c4"></div>
<div style="left:625px;top:696px;width:2px;height:16px;background:#eef3fc"></div><div style="left:628px;top:696px;width:1px;height:16px;background:#6285c4"></div>
<div style="left:859px;top:696px;width:2px;height:16px;background:#eef3fc"></div><div style="left:862px;top:696px;width:1px;height:16px;background:#6285c4"></div>
<svg style="left:119px;top:695px" width="24" height="16" viewBox="0 0 24 16"><path d="M0 3l5 2v7l-5 2 2-5.500zM24 3l-5 2v7l5 2-2-5.500z" fill="#f0c020"/><ellipse cx="12" cy="8" rx="8.500" ry="7" fill="#f8d030"/><ellipse cx="12" cy="8" rx="7" ry="5.600" fill="#d81818"/><text x="12" y="10.600" text-anchor="middle" font-family="Liberation Sans,sans-serif" font-weight="bold" font-size="7" fill="#fff">VIP</text></svg>
<svg style="left:358px;top:695px" width="18" height="16" viewBox="0 0 18 16"><rect x="9" y="5" width="9" height="11" rx="1" fill="#f09820"/><rect x="11" y="7" width="5.500" height="6" fill="#f8b848"/><circle cx="7" cy="9" r="6.300" fill="#fbe468"/><path d="M.8 8.500a6.300 6.300 0 0 1 12.400-1.500c-2.500 0-4.500-1-5.500-2.800-1.200 2.300-4 3.800-6.900 4.300z" fill="#7a3c18"/><circle cx="5" cy="9.500" r=".9" fill="#2040c0"/><circle cx="9" cy="9.500" r=".9" fill="#2040c0"/><ellipse cx="7" cy="12.700" rx="1.500" ry="1" fill="#f04060"/></svg>
<svg style="left:631px;top:696px" width="15" height="15" viewBox="0 0 16 16"><circle cx="8" cy="8" r="7.600" fill="#c4d0e4"/><circle cx="8" cy="8.300" r="6.400" fill="#1c68d4"/><path d="M1.800 7.500a6.300 6.300 0 0 1 12.400 0c-2 -1.500-4-1-6.200 .3-2.200-1.300-4.200-1.800-6.200-.3z" fill="#bcd4f0"/><path d="M4.500 13.500c1.500-3 5.500-3 7 0-2 1.600-5 1.600-7 0z" fill="#48c8f0"/><path d="M8.500 8.500l1.500-4 .8 3.500z" fill="#d82828"/><circle cx="8" cy="8" r="7.300" fill="none" stroke="#eef2f8" stroke-width="1" stroke-dasharray="1.500 1.500"/></svg>
<span class="fl" style="left:650px;top:697px;letter-spacing:-.5px">2020年6月21日</span>
<span class="fl" style="left:736px;top:697px;color:#ff0000">星期天</span>
<span class="fl" style="left:790px;top:697px;font-size:11px;letter-spacing:.6px">11:36:31</span>
<svg style="left:864px;top:696px" width="16" height="15" viewBox="0 0 17 16"><path d="M2.500 8h12v8h-12z" fill="#fbf3dc"/><path d="M0 9l8.500-8.500 8.500 8.500-1.200 1-7.300-7-7.300 7z" fill="#e86018"/><path d="M8.500 1.500l7 7h-14z" fill="#f08030"/><rect x="11" y="10" width="3" height="6" fill="#a83818"/><rect x="4.500" y="10" width="4" height="3.500" fill="#f0c870"/><rect x="12" y="1.500" width="2" height="3.500" fill="#d8d0c0"/></svg>
<span class="fl" style="left:883px;top:696px;color:#0000ff;font-weight:bold;width:85px;overflow:hidden;letter-spacing:.8px;font-size:12px">版本号: 15.3 单据</span>
</body></html>
